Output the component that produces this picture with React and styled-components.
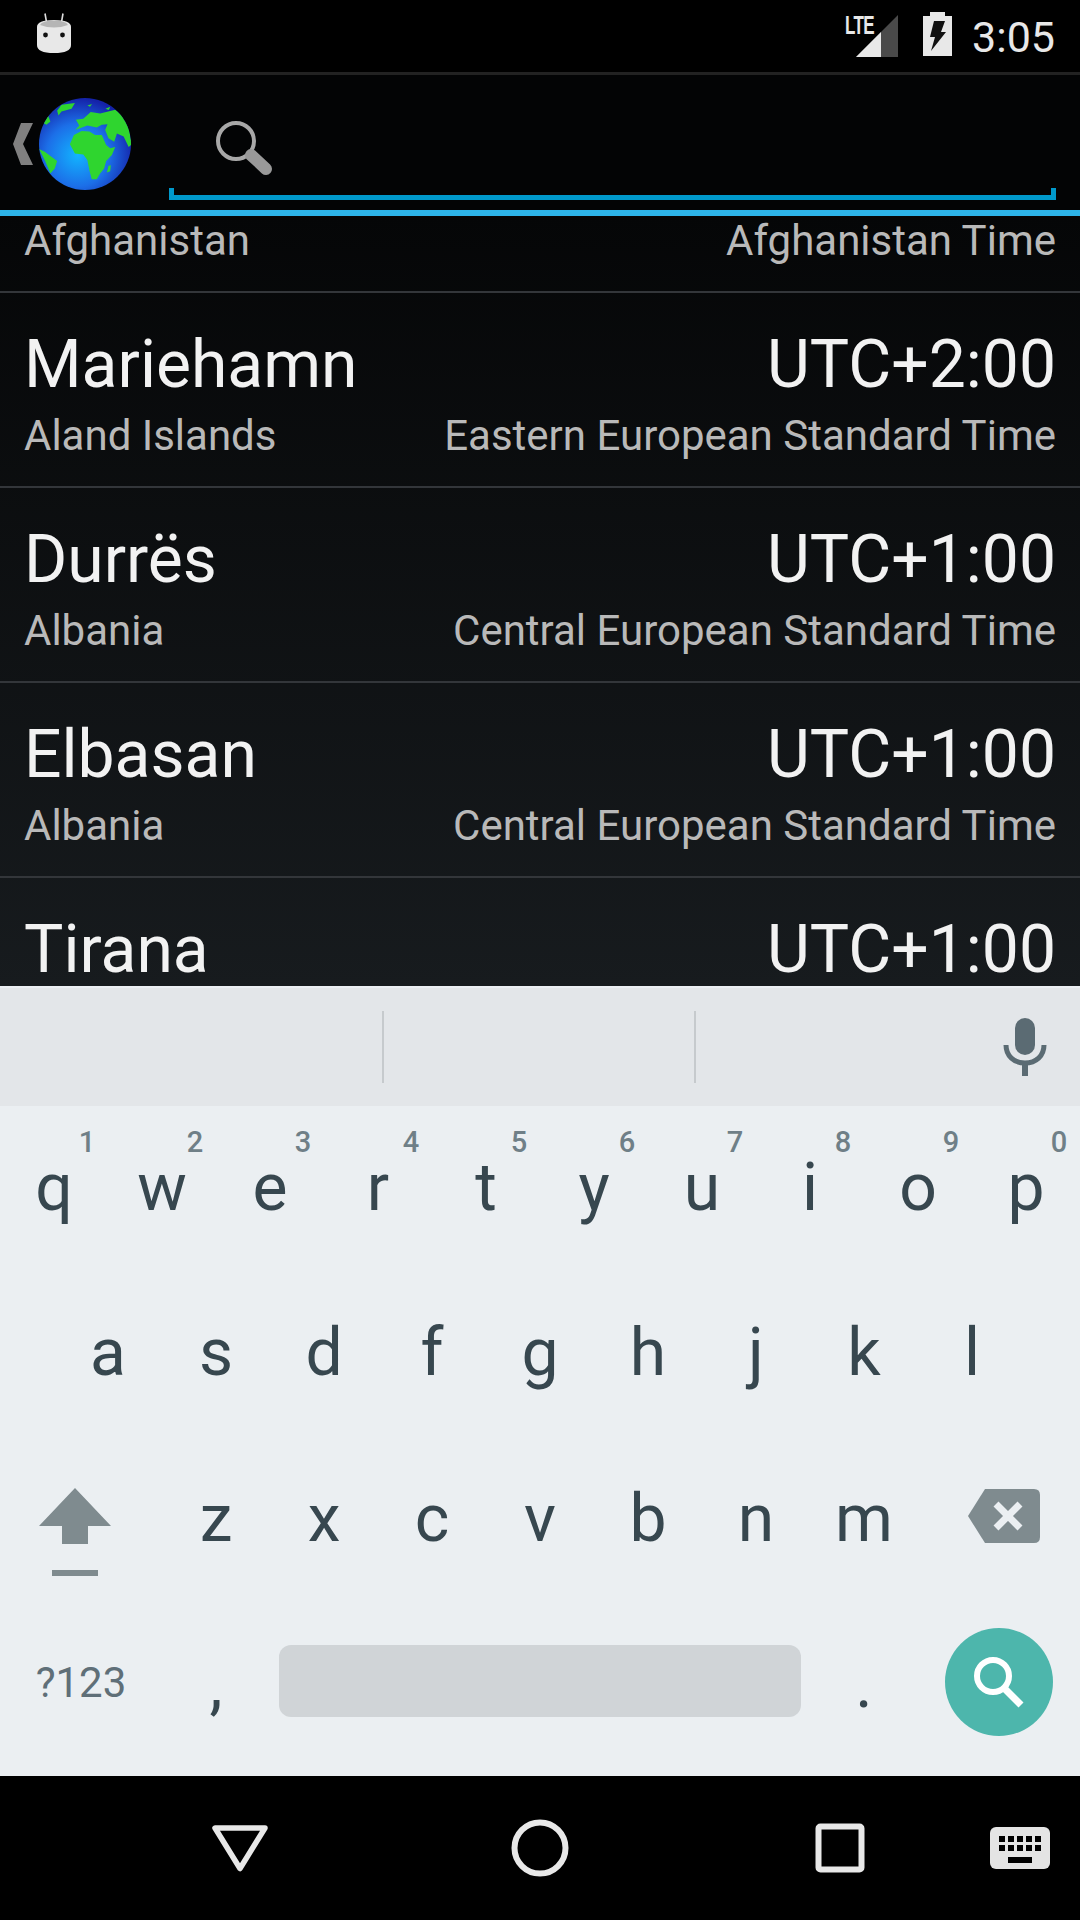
import React from "react";
import styled, { createGlobalStyle } from "styled-components";

const Global = createGlobalStyle`
  html, body { margin: 0; padding: 0; background: #000; }
  * { box-sizing: border-box; }
  #root { width: 1080px; height: 1920px; overflow: hidden; }
`;

const Screen = styled.div`
  width: 1080px;
  height: 1920px;
  display: flex;
  flex-direction: column;
  font-family: Roboto, "Liberation Sans", sans-serif;
  background: #000;
`;

const StatusBar = styled.div`
  height: 72px;
  display: flex;
  align-items: flex-start;
  background: #000;
  padding: 12px 25px 0 36px;
`;
const Spacer = styled.div`
  flex: 1;
`;
const Clock = styled.div`
  font-size: 43px;
  line-height: 50px;
  margin-left: 20px;
  color: #e8e8e8;
`;
const BatteryWrap = styled.div`
  margin-left: 25px;
`;
const Lte = styled.span`
  position: absolute;
  left: -11px;
  top: -1px;
  font-family: "Liberation Sans", sans-serif;
  font-weight: 700;
  font-size: 25px;
  line-height: 23px;
  letter-spacing: -1px;
  transform: scaleX(0.68);
  transform-origin: left center;
  color: #e8e8e8;
`;
const Signal = styled.div`
  position: relative;
  width: 42px;
  height: 42px;
  margin-top: 3px;
`;

const AppBar = styled.div`
  height: 138px;
  border-top: 3px solid #222;
  background: #030405;
  display: flex;
  align-items: flex-start;
  padding: 0 24px 0 13px;
`;
const BackChevron = styled.svg`
  width: 20px;
  height: 42px;
  margin-top: 48px;
  margin-right: 6px;
`;
const Globe = styled.svg`
  width: 92px;
  height: 92px;
  margin-top: 23px;
`;
const SearchField = styled.div`
  flex: 1;
  height: 113px;
  margin-left: 38px;
  margin-top: 12px;
  position: relative;
  border-bottom: 5px solid #0099cc;
  border-left: 5px solid transparent;
  border-right: 5px solid transparent;
  padding-left: 40px;
  padding-top: 32px;
  &::before,
  &::after {
    content: "";
    position: absolute;
    bottom: -5px;
    width: 5px;
    height: 12px;
    background: #0099cc;
  }
  &::before { left: -5px; }
  &::after { right: -5px; }
`;
const AccentLine = styled.div`
  height: 6px;
  background: #2db4e8;
`;

const List = styled.div`
  height: 770px;
  overflow: hidden;
  background: linear-gradient(#050607, #171b1e);
`;
const PartialRow = styled.div`
  height: 77px;
  padding: 0 24px;
  display: flex;
  justify-content: space-between;
  align-items: flex-start;
  border-bottom: 2px solid #33363a;
`;
const Row = styled.div`
  height: 195px;
  padding: 33px 24px 0;
  border-bottom: 2px solid #33363a;
`;
const Line = styled.div`
  display: flex;
  justify-content: space-between;
  align-items: baseline;
  white-space: nowrap;
`;
const Title = styled.span`
  font-size: 66px;
  line-height: 78px;
  color: #f2f2f2;
`;
const Sub = styled.span`
  font-size: 42px;
  line-height: 52px;
  color: #b9b9b9;
`;
const FirstSub = styled(Sub)`
  margin-top: -1px;
`;
const SubLine = styled(Line)`
  margin-top: 6px;
`;

const Keyboard = styled.div`
  height: 790px;
  background: #ebeff2;
  display: flex;
  flex-direction: column;
`;
const Strip = styled.div`
  height: 118px;
  margin-top: 2px;
  background: #e3e6e9;
  display: flex;
  align-items: center;
`;
const StripCell = styled.div`
  width: ${(p) => p.$w}px;
  height: 72px;
  border-right: 2px solid #c6cacd;
`;
const Mic = styled.svg`
  width: 44px;
  height: 58px;
  margin-left: 307px;
`;
const Keys = styled.div`
  margin-top: 2px;
  display: flex;
  flex-direction: column;
`;
const KeyRow = styled.div`
  height: 166px;
  display: flex;
  padding-left: ${(p) => p.$inset || 0}px;
`;
const Key = styled.div`
  width: ${(p) => p.$w || 108}px;
  height: 166px;
  position: relative;
  display: flex;
  justify-content: center;
  align-items: center;
  font-size: 66px;
  color: #37474f;
  padding-bottom: 10px;
`;
const TopKey = styled(Key)`
  padding-bottom: 7px;
`;
const Hint = styled.span`
  position: absolute;
  top: 17px;
  left: 72px;
  width: 30px;
  text-align: center;
  font-size: 29px;
  line-height: 34px;
  font-weight: 500;
  color: #6f7f87;
`;
const ModeKey = styled(Key)`
  font-size: 42px;
  color: #5f6f78;
  padding-bottom: 14px;
`;
const Punct = styled(Key)`
  align-items: flex-start;
  padding: 40px 0 0;
`;
const Space = styled.div`
  width: 522px;
  height: 72px;
  margin: 39px 9px 0;
  background: #d0d4d7;
  border-radius: 12px;
`;
const ActionKey = styled(Key)`
  padding-bottom: 14px;
`;
const ActionCircle = styled.div`
  width: 108px;
  height: 108px;
  border-radius: 50%;
  background: #4db6ac;
  display: flex;
  align-items: center;
  justify-content: center;
`;
const ShiftIcon = styled.svg`
  width: 72px;
  height: 90px;
  margin-right: 12px;
  margin-top: 30px;
`;
const DelIcon = styled.svg`
  width: 72px;
  height: 54px;
  margin-left: 10px;
  margin-bottom: 4px;
`;

const NavBar = styled.div`
  height: 144px;
  background: #000;
  display: flex;
  align-items: center;
  padding-left: 180px;
`;
const NavCell = styled.div`
  width: 120px;
  display: flex;
  justify-content: center;
  margin-left: ${(p) => p.$gap || 0}px;
`;

const rows = [
  ["Mariehamn", "UTC+2:00", "Aland Islands", "Eastern European Standard Time"],
  ["Durrës", "UTC+1:00", "Albania", "Central European Standard Time"],
  ["Elbasan", "UTC+1:00", "Albania", "Central European Standard Time"],
];
const top = ["q", "w", "e", "r", "t", "y", "u", "i", "o", "p"];
const hints = ["1", "2", "3", "4", "5", "6", "7", "8", "9", "0"];
const mid = ["a", "s", "d", "f", "g", "h", "j", "k", "l"];
const low = ["z", "x", "c", "v", "b", "n", "m"];

const Robot = () => (
  <svg width="36" height="42" viewBox="0 0 36 42">
    <path d="M9 1.5 L10.5 10 M27 1.5 L25.5 10" stroke="#ddd" strokeWidth="1.6" />
    <path d="M1 15 Q1 8 18 8 Q35 8 35 15 L35 33 Q35 41 18 41 Q1 41 1 33 Z" fill="#e8e8e8" />
    <path d="M4 13 Q6 8.5 18 8.5 Q30 8.5 32 13 Q25 15.5 18 15.5 Q11 15.5 4 13 Z" fill="#b5b5b5" />
    <circle cx="9.5" cy="23" r="2.4" fill="#111" />
    <circle cx="26.5" cy="23" r="2.4" fill="#111" />
  </svg>
);

export default function App() {
  return (
    <Screen>
      <Global />
      <StatusBar>
        <Robot />
        <Spacer />
        <Signal>
          <Lte>LTE</Lte>
          <svg width="42" height="42" viewBox="0 0 42 42">
            <path d="M0 42 L42 0 V42 Z" fill="#4a4a4a" />
            <path d="M0 42 L25 17 V42 Z" fill="#e8e8e8" />
          </svg>
        </Signal>
        <BatteryWrap>
          <svg width="29" height="44" viewBox="0 0 29 44">
            <path d="M7 0 H22 V4 H29 V44 H0 V4 H7 Z" fill="#e8e8e8" />
            <path d="M11 9 H22 L18 20 H23 L8 39 L12 25 H7 Z" fill="#111" />
          </svg>
        </BatteryWrap>
        <Clock>3:05</Clock>
      </StatusBar>
      <AppBar>
        <BackChevron viewBox="0 0 20 42">
          <path d="M8 0 H20 L10 21 L20 42 H8 L0 21 Z" fill="#808080" />
        </BackChevron>
        <Globe viewBox="118 40 274 274">
          <defs>
            <radialGradient id="sea" cx="42%" cy="62%" r="62%">
              <stop offset="0" stopColor="#12b4ff" />
              <stop offset="0.55" stopColor="#1c6fe8" />
              <stop offset="1" stopColor="#1422a8" />
            </radialGradient>
            <clipPath id="ball">
              <circle cx="255" cy="177" r="137" />
            </clipPath>
          </defs>
          <circle cx="255" cy="177" r="137" fill="url(#sea)" />
          <g fill="#2fd52f" clipPath="url(#ball)">
            <path d="M210 178 L222 150 L245 138 L268 140 L285 150 L305 150 L318 180 L330 190 L345 186 L335 210 L318 228 L312 250 L300 265 L290 282 L275 282 L268 255 L262 225 L250 208 L225 205 Z" />
            <path d="M226 135 L238 122 L228 105 L250 102 L272 82 L300 86 L345 75 L370 95 L385 125 L394 178 L385 186 L370 155 L350 146 L342 170 L325 160 L315 135 L322 118 L305 120 L290 128 L262 122 Z" />
            <path d="M172 78 L185 60 L225 55 L215 72 L185 80 L176 92 Z" />
            <path d="M118 192 L135 200 L172 228 L165 250 L152 265 L135 225 Z" />
            <path d="M132 115 L145 92 L152 110 L140 120 Z" />
            <path d="M320 262 L325 242 L332 240 L330 258 Z" />
            <path d="M262 62 L276 58 L270 66 Z" />
            <path d="M316 72 L330 66 L326 76 Z" />
          </g>
        </Globe>
        <SearchField>
          <svg width="60" height="60" viewBox="0 0 60 60">
            <circle cx="22" cy="22" r="18" fill="none" stroke="#a8a8a8" strokeWidth="4" />
            <path d="M37 36 L52 50" stroke="#999" strokeWidth="12" strokeLinecap="round" />
          </svg>
        </SearchField>
      </AppBar>
      <AccentLine />
      <List>
        <PartialRow>
          <FirstSub>Afghanistan</FirstSub>
          <FirstSub>Afghanistan Time</FirstSub>
        </PartialRow>
        {rows.map((r) => (
          <Row key={r[0]}>
            <Line>
              <Title>{r[0]}</Title>
              <Title>{r[1]}</Title>
            </Line>
            <SubLine>
              <Sub>{r[2]}</Sub>
              <Sub>{r[3]}</Sub>
            </SubLine>
          </Row>
        ))}
        <Row>
          <Line>
            <Title>Tirana</Title>
            <Title>UTC+1:00</Title>
          </Line>
        </Row>
      </List>
      <Keyboard>
        <Strip>
          <StripCell $w={384} />
          <StripCell $w={312} />
          <Mic viewBox="0 0 44 58">
            <rect x="12" y="0" width="20" height="37" rx="10" fill="#5b6b73" />
            <path d="M3 27 C3 38 11 45 22 45 C33 45 41 38 41 27" fill="none" stroke="#5b6b73" strokeWidth="5" />
            <rect x="19" y="44" width="6" height="14" fill="#5b6b73" />
          </Mic>
        </Strip>
        <Keys>
          <KeyRow>
            {top.map((k, i) => (
              <TopKey key={k}>
                {k}
                <Hint>{hints[i]}</Hint>
              </TopKey>
            ))}
          </KeyRow>
          <KeyRow $inset={54}>
            {mid.map((k) => (
              <Key key={k}>{k}</Key>
            ))}
          </KeyRow>
          <KeyRow>
            <Key $w={162}>
              <ShiftIcon viewBox="0 0 72 90">
                <path d="M36 0 L72 38 H49 V56 H23 V38 H0 Z" fill="#7f8b8f" />
                <rect x="13" y="82" width="46" height="6" fill="#7f8b8f" />
              </ShiftIcon>
            </Key>
            {low.map((k) => (
              <Key key={k}>{k}</Key>
            ))}
            <Key $w={162}>
              <DelIcon viewBox="0 0 72 54">
                <path d="M17 0 H66 Q72 0 72 6 V48 Q72 54 66 54 H17 L0 27 Z" fill="#7f8b8f" />
                <path d="M28 15 L52 39 M52 15 L28 39" stroke="#ebeff2" strokeWidth="7" />
              </DelIcon>
            </Key>
          </KeyRow>
          <KeyRow>
            <ModeKey $w={162}>?123</ModeKey>
            <Punct>,</Punct>
            <Space />
            <Punct>.</Punct>
            <ActionKey $w={162}>
              <ActionCircle>
                <svg width="56" height="56" viewBox="0 0 56 56">
                  <circle cx="22" cy="22" r="16" fill="none" stroke="#fff" strokeWidth="6" />
                  <path d="M33 34 L50 51" stroke="#fff" strokeWidth="7" />
                </svg>
              </ActionCircle>
            </ActionKey>
          </KeyRow>
        </Keys>
      </Keyboard>
      <NavBar>
        <NavCell>
          <svg width="60" height="50" viewBox="30 0 60 50">
            <path d="M35 5 H85 L60 45.5 Z" fill="none" stroke="#e8e8e8" strokeWidth="5.5" strokeLinejoin="round" />
          </svg>
        </NavCell>
        <NavCell $gap={180}>
          <svg width="58" height="58" viewBox="0 0 58 58">
            <circle cx="29" cy="29" r="25.5" fill="none" stroke="#e8e8e8" strokeWidth="6" />
          </svg>
        </NavCell>
        <NavCell $gap={180}>
          <svg width="50" height="50" viewBox="0 0 50 50">
            <rect x="3.5" y="3.5" width="43" height="43" rx="2" fill="none" stroke="#e8e8e8" strokeWidth="6" />
          </svg>
        </NavCell>
        <NavCell $gap={60}>
          <svg width="60" height="42" viewBox="0 0 60 42">
            <rect width="60" height="42" rx="6" fill="#e4e4e4" />
            <g fill="#000">
              {[9, 18, 27, 36, 45].map((x) => (
                <React.Fragment key={x}>
                  <rect x={x} y="9" width="6" height="6" />
                  <rect x={x} y="18" width="6" height="6" />
                </React.Fragment>
              ))}
              <rect x="18" y="30" width="24" height="6" />
            </g>
          </svg>
        </NavCell>
      </NavBar>
    </Screen>
  );
}
